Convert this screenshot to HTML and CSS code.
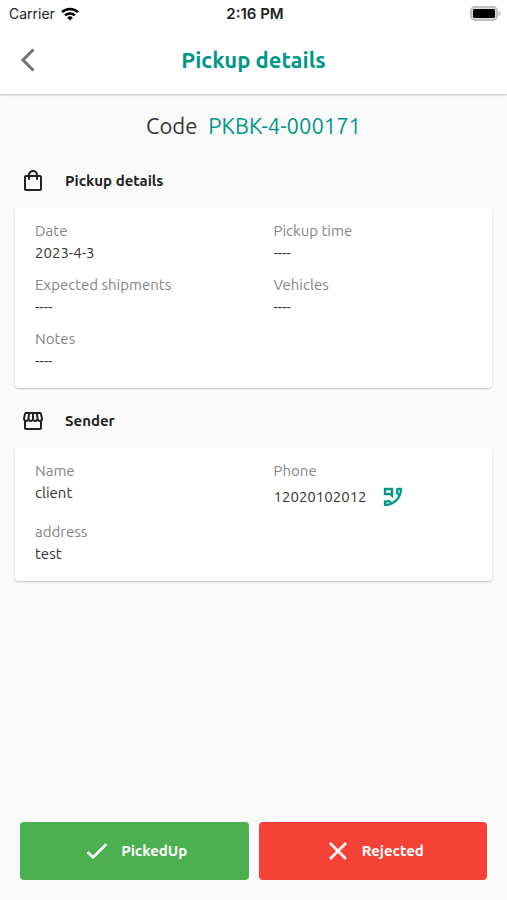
FILE: index.html
```html
<!DOCTYPE html>
<html lang="en">
<head>
<meta charset="utf-8">
<meta name="viewport" content="width=device-width, initial-scale=1">
<title>Pickup details</title>
<link rel="stylesheet" href="styles.css">
</head>
<body>
<header class="top">
  <div class="status">
    <span class="carrier">Carrier
      <svg width="18" height="14" viewBox="0 0 18 14" fill="none" stroke="#000" stroke-width="2.5" aria-hidden="true"><path d="M1 5.2a11.5 11.5 0 0 1 16 0M4 8.4a7.2 7.2 0 0 1 10 0"/><path d="M9 13.5 6.2 10.7a4 4 0 0 1 5.6 0z" fill="#000" stroke="none"/></svg>
    </span>
    <span class="clock">2:16 PM</span>
    <span class="battery">
      <svg width="31" height="15" viewBox="0 0 31 15" aria-hidden="true"><rect x="1" y="1" width="26" height="13" rx="4" fill="#ddd" stroke="#bfbfbf" stroke-width="2"/><rect x="3" y="3" width="22" height="9" rx="1.5"/><path d="M28.5 5v5c1.5-.5 2-1.500 2-2.500s-.5-2-2-2.500z" fill="#b5b5b5"/></svg>
    </span>
  </div>
  <nav class="bar">
    <button class="back" type="button" aria-label="Back">
      <svg width="16" height="24" viewBox="0 0 16 24" fill="none" stroke="#757575" stroke-width="3" aria-hidden="true"><path d="M13.500 1.500 3 12l10.500 10.500"/></svg>
    </button>
    <h1>Pickup details</h1>
  </nav>
</header>
<main>
  <p class="code">Code <strong>PKBK-4-000171</strong></p>
  <section>
    <h2>
      <svg width="24" height="24" viewBox="0 0 24 24" fill="#222" aria-hidden="true"><path d="M19 6h-2c0-2.760-2.240-5-5-5S7 3.240 7 6H5c-1.100 0-2 .9-2 2v12c0 1.100.9 2 2 2h14c1.100 0 2-.9 2-2V8c0-1.100-.9-2-2-2zm-7-3c1.660 0 3 1.340 3 3H9c0-1.660 1.340-3 3-3zm7 17H5V8h2v2c0 .55.45 1 1 1s1-.45 1-1V8h6v2c0 .55.45 1 1 1s1-.45 1-1V8h2v12z"/></svg>
      Pickup details
    </h2>
    <dl class="card">
      <div><dt>Date</dt><dd>2023-4-3</dd></div>
      <div><dt>Pickup time</dt><dd>----</dd></div>
      <div><dt>Expected shipments</dt><dd>----</dd></div>
      <div><dt>Vehicles</dt><dd>----</dd></div>
      <div><dt>Notes</dt><dd>----</dd></div>
    </dl>
  </section>
  <section>
    <h2>
      <svg width="24" height="24" viewBox="0 0 24 24" fill="#222" aria-hidden="true"><path d="M21.900 8.890l-1.050-4.370c-.22-.9-1-1.520-1.910-1.520H5.050c-.9 0-1.690.63-1.900 1.520L2.100 8.890c-.24 1.020-.02 2.060.62 2.880.08.110.19.190.28.290V19c0 1.100.9 2 2 2h14c1.100 0 2-.9 2-2v-6.940c.09-.09.2-.18.280-.28.640-.82.870-1.870.620-2.890zm-2.990-3.900l1.050 4.370c.1.420.01.840-.25 1.170-.14.180-.44.470-.94.470-.61 0-1.140-.49-1.210-1.140L16.980 5l1.930-.01zM13 5h1.960l.54 4.520c.05.390-.07.780-.33 1.070-.22.260-.54.410-.95.410-.67 0-1.220-.59-1.220-1.310V5zM8.490 9.520L9.040 5H11v4.690c0 .72-.55 1.310-1.290 1.310-.34 0-.65-.15-.89-.41-.25-.29-.37-.68-.33-1.070zm-4.450-.16L5.050 5h1.970l-.58 4.860c-.08.650-.6 1.140-1.210 1.140-.49 0-.8-.29-.93-.47-.27-.32-.36-.75-.26-1.170zM5 19v-6.030c.08.010.150.030.230.030.87 0 1.660-.36 2.240-.95.600.600 1.400.950 2.310.950.870 0 1.650-.36 2.230-.93.590.570 1.390.930 2.290.930.840 0 1.640-.35 2.240-.95.580.590 1.370.950 2.240.950.080 0 .150-.02.230-.03V19H5z"/></svg>
      Sender
    </h2>
    <dl class="card">
      <div><dt>Name</dt><dd>client</dd></div>
      <div><dt>Phone</dt><dd class="phone">12020102012
        <button type="button" aria-label="Call"><svg width="24" height="24" viewBox="0 0 24 24" fill="#009688" stroke="#009688" stroke-width=".4" aria-hidden="true"><path transform="matrix(-1 0 0 1 24 0)" d="M20 15.5c-1.25 0-2.45-.2-3.57-.57-.1-.03-.21-.05-.31-.05-.26 0-.51.1-.71.29l-2.2 2.2c-2.83-1.44-5.15-3.75-6.59-6.58l2.2-2.21c.28-.27.36-.66.25-1.01C8.7 6.45 8.5 5.25 8.5 4c0-.55-.45-1-1-1H4c-.55 0-1 .45-1 1 0 9.39 7.61 17 17 17 .55 0 1-.45 1-1v-3.5c0-.55-.45-1-1-1zM5.030 5h1.500c.07.88.22 1.750.46 2.590L5.790 8.800c-.41-1.210-.67-2.480-.76-3.800zM19 18.970c-1.320-.09-2.590-.35-3.800-.75l1.200-1.200c.85.24 1.710.39 2.600.45v1.500zM12 3v10l3-3h6V3h-9zm7 5h-5V5h5v3z"/></svg></button>
      </dd></div>
      <div><dt>address</dt><dd>test</dd></div>
    </dl>
  </section>
</main>
<footer class="actions">
  <button class="picked" type="button"><svg width="24" height="24" viewBox="0 0 24 24" aria-hidden="true"><path d="m2.500 13 5.500 5.500L21.500 5"/></svg>PickedUp</button>
  <button class="rejected" type="button"><svg width="24" height="24" viewBox="0 0 24 24" aria-hidden="true"><path d="m4 4 16 16M20 4 4 20"/></svg>Rejected</button>
</footer>
</body>
</html>
```
FILE: styles.css
```css
* { box-sizing: border-box; }

body {
  margin: 0;
  min-height: 100vh;
  display: flex;
  flex-direction: column;
  background: #fafafa;
  color: #333;
  font: 15px/22px Ubuntu, "Noto Sans", sans-serif;
}

h1, h2, p, dl, dd { margin: 0; }
svg { display: block; flex: none; }

button {
  border: 0;
  padding: 0;
  background: none;
  font: inherit;
  cursor: pointer;
}

.top {
  background: #fff;
  box-shadow: 0 1px 2px rgba(0, 0, 0, .25);
}

.status {
  display: grid;
  grid-template-columns: 1fr auto 1fr;
  align-items: center;
  height: 27px;
  padding: 0 6px 0 9px;
  font: 14px/27px Inter, sans-serif;
  color: #222;
}

.carrier { display: flex; align-items: center; gap: 6px; }
.clock { font-size: 15px; font-weight: 600; }
.battery { justify-self: end; }

.bar {
  display: grid;
  grid-template-columns: 40px 1fr 40px;
  align-items: center;
  height: 67px;
  padding: 0 20px 1px;
}

.back { justify-self: start; }

h1 {
  text-align: center;
  color: #009688;
  font-size: 22px;
  font-weight: 700;
}

main {
  flex: 1;
  padding: 16px 15px;
}

.code {
  text-align: center;
  font-size: 22px;
  line-height: 32px;
}

.code strong {
  margin-left: 6px;
  color: #009688;
  font-weight: 400;
}

section { padding-top: 12px; }
.code + section { padding-top: 18px; }

h2 {
  display: flex;
  align-items: center;
  gap: 20px;
  height: 42px;
  margin-bottom: 6px;
  padding-left: 6px;
  color: #222;
  font-size: 15px;
  font-weight: 700;
}

.card {
  display: grid;
  grid-template-columns: 1fr 1fr;
  row-gap: 10px;
  padding: 12px 0 16px;
  border-radius: 4px;
  background: #fff;
  box-shadow: 0 1px 2px rgba(0, 0, 0, .22);
}

.card div { padding-left: 20px; }

dt { color: #858585; }

.phone {
  display: flex;
  align-items: center;
  gap: 14px;
  height: 29px;
}

.actions {
  display: grid;
  grid-template-columns: 1fr 1fr;
  gap: 10px;
  padding: 0 20px 20px;
}

.actions button {
  display: flex;
  align-items: center;
  justify-content: center;
  gap: 12px;
  height: 58px;
  padding-left: 4px;
  border-radius: 4px;
  color: #fff;
  font-weight: 700;
}

.actions svg { fill: none; stroke: #fff; stroke-width: 2.5; }
.picked { background: #4caf50; }
.rejected { background: #f44336; }
```
